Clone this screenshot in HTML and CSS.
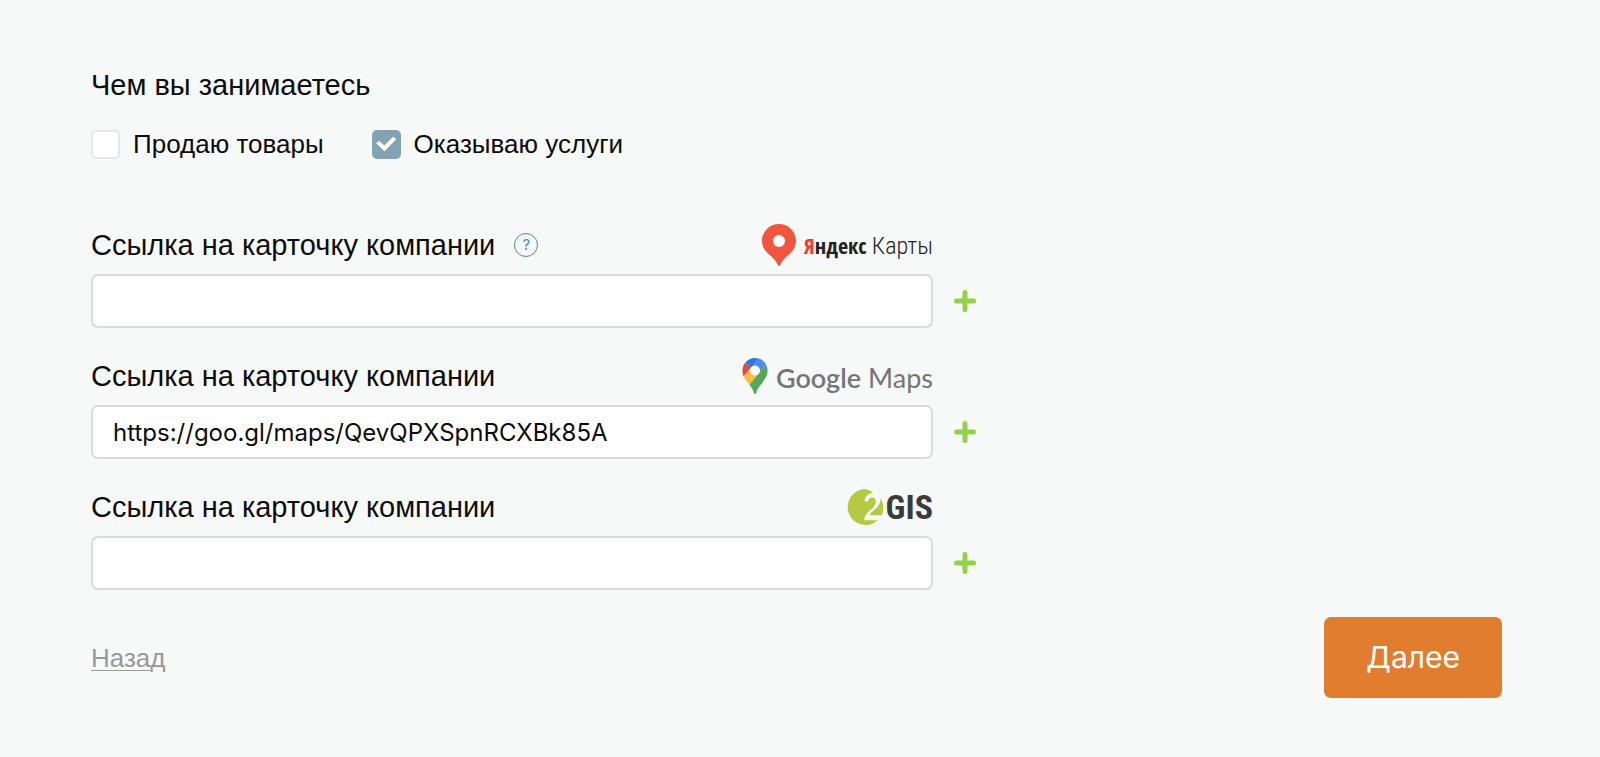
FILE: index.html
```html
<!DOCTYPE html>
<html lang="ru">
<head>
<meta charset="utf-8">
<meta name="viewport" content="width=device-width, initial-scale=1">
<title>О компании</title>
<link rel="stylesheet" href="styles.css">
</head>
<body>
<form class="page">
  <fieldset class="activity">
    <legend class="activity-title">Чем вы занимаетесь</legend>
    <div class="options">
      <label class="option"><input class="check" type="checkbox">Продаю товары</label>
      <label class="option"><input class="check" type="checkbox" checked>Оказываю услуги</label>
    </div>
  </fieldset>

  <div class="fields">
    <div class="field">
      <div class="field-head">
        <label class="field-label" for="yandex">Ссылка на карточку компании</label>
        <button class="help" type="button" aria-label="Подсказка">?</button>
        <span class="brand brand-yandex">
          <svg class="yandex-pin" viewBox="0 0 34 42" aria-hidden="true">
            <path fill="#ee563f" d="M17 0C7.600 0 0 7.500 0 16.800c0 5.400 2.400 9.400 6.300 12.900 4.600 4 7.900 7 9.600 11.500.4 1 1.800 1 2.200 0 1.700-4.500 5-7.500 9.600-11.500C31.600 26.200 34 22.200 34 16.800 34 7.500 26.400 0 17 0z"/>
            <circle cx="17" cy="17" r="6" fill="#fff"/>
          </svg>
          <span class="yandex-name"><b class="yandex-word"><span class="yandex-ya">Я</span>ндекс</b> Карты</span>
        </span>
      </div>
      <input class="text-input" id="yandex" type="text">
      <button class="add" type="button" aria-label="Добавить ссылку">
        <svg class="plus" viewBox="0 0 22 22" aria-hidden="true"><path d="M11 2.500v17M2.500 11h17"/></svg>
      </button>
    </div>

    <div class="field">
      <div class="field-head">
        <label class="field-label" for="google">Ссылка на карточку компании</label>
        <span class="brand brand-google">
          <svg class="google-pin" viewBox="0 0 92.300 132.300" aria-hidden="true">
            <path fill="#2f74df" d="M60.200 2.200C55.800.8 51 0 46.100 0 32 0 19.300 6.400 10.800 16.500l21.800 18.300z"/>
            <path fill="#db4f42" d="M10.800 16.500C4.100 24.500 0 34.900 0 46.100c0 8.700 1.700 15.700 4.600 22l28-33.300z"/>
            <path fill="#4f8af0" d="M46.200 28.500c9.800 0 17.700 7.900 17.700 17.700 0 4.300-1.600 8.300-4.200 11.400 0 0 13.900-16.600 27.500-32.700-5.600-10.800-15.300-19-27-22.700L32.600 34.800c3.300-3.800 8.100-6.300 13.600-6.300"/>
            <path fill="#f6bd42" d="M46.200 63.800c-9.800 0-17.700-7.900-17.700-17.700 0-4.300 1.500-8.300 4.100-11.300l-28 33.300c4.800 10.600 12.800 19.200 21 29.900l34.100-40.500c-3.300 3.900-8.100 6.300-13.500 6.300"/>
            <path fill="#56a65b" d="M59.100 109.200c15.400-24.100 33.300-35 33.300-63 0-7.700-1.900-14.900-5.200-21.300L25.600 98c2.600 3.400 5.300 7.300 7.900 11.300 9.400 14.500 6.800 23.100 12.800 23.100s3.400-8.700 12.800-23.200"/>
            <circle cx="46.200" cy="46.200" r="17.700" fill="#fff"/>
          </svg>
          <span class="google-name"><b class="google-word">Google</b> Maps</span>
        </span>
      </div>
      <input class="text-input" id="google" type="text" value="https://goo.gl/maps/QevQPXSpnRCXBk85A">
      <button class="add" type="button" aria-label="Добавить ссылку">
        <svg class="plus" viewBox="0 0 22 22" aria-hidden="true"><path d="M11 2.500v17M2.500 11h17"/></svg>
      </button>
    </div>

    <div class="field">
      <div class="field-head">
        <label class="field-label" for="gis">Ссылка на карточку компании</label>
        <span class="brand brand-gis">
          <svg class="gis-mark" viewBox="0 0 37 36" role="img" aria-label="2">
            <path fill="#b5ca42" d="M18.300 0A18 18 0 1 0 30.800 31.300H17.200c0-4.100 2-6.900 6.300-10.300 3.900-3 5.300-5.500 5.300-8.600 0-2.600-1.300-3.900-3.400-3.900-2.300 0-3.600 1.300-4.600 4.100l-3.400-.6c.8-4.500 4-7.700 9-7.900A18 18 0 0 0 18.300 0z"/>
            <path fill="#b5ca42" d="M33.400 9.200c.2 5.700-2.300 8.600-6.500 12-2.400 1.900-3.700 3.400-4.200 5h12.200c2.300-5.700 2-11.800-1.500-17z"/>
          </svg>
          <span class="gis-name">GIS</span>
        </span>
      </div>
      <input class="text-input" id="gis" type="text">
      <button class="add" type="button" aria-label="Добавить ссылку">
        <svg class="plus" viewBox="0 0 22 22" aria-hidden="true"><path d="M11 2.500v17M2.500 11h17"/></svg>
      </button>
    </div>
  </div>

  <div class="actions">
    <a class="back" href="#">Назад</a>
    <button class="next" type="submit">Далее</button>
  </div>
</form>
</body>
</html>
```

FILE: styles.css
```css
* {
  box-sizing: border-box;
}

body {
  margin: 0;
  background: #f7f9f8;
  color: #0c0c0c;
  font-family: "Liberation Sans", Arial, sans-serif;
}

.page {
  padding: 68px 98px 56px 91px;
}

.activity {
  margin: 0;
  padding: 0;
  border: 0;
}

.activity-title {
  padding: 0;
  font-size: 29px;
  line-height: 34px;
}

.options {
  display: flex;
  flex-wrap: wrap;
  gap: 12px 48px;
  padding-top: 26px;
}

.option {
  display: flex;
  align-items: center;
  gap: 13px;
  font-size: 26px;
  line-height: 32px;
}

.check {
  appearance: none;
  display: grid;
  place-items: center;
  width: 29px;
  height: 29px;
  margin: 0;
  border: 2px solid #e2e9ee;
  border-radius: 5px;
  background: #fff;
}

.check:checked {
  border-color: #83a3b5;
  background: #83a3b5;
}

.check:checked::before {
  content: "";
  width: 20px;
  height: 16px;
  background: #fff;
  clip-path: polygon(0 45%, 15% 29%, 41% 60%, 85% 4%, 100% 20%, 42% 96%);
}

.fields {
  display: grid;
  gap: 27px;
  margin-top: 64px;
}

.field {
  display: grid;
  grid-template-columns: minmax(0, 842px) 22px;
  column-gap: 21px;
  row-gap: 8px;
  align-items: center;
}

.field-head {
  grid-column: 1 / 2;
  display: flex;
  align-items: center;
  gap: 19px;
  height: 42px;
}

.field-label {
  font-size: 29px;
  line-height: 34px;
}

.help {
  width: 24px;
  height: 24px;
  padding: 0;
  border: 1px solid #4a86c5;
  border-radius: 50%;
  background: transparent;
  color: #4a86c5;
  font: 15px/20px Inter, sans-serif;
}

.brand {
  display: flex;
  align-items: center;
  margin-left: auto;
  white-space: nowrap;
}

.brand-yandex {
  gap: 8px;
}

.yandex-pin {
  width: 34px;
  height: 42px;
}

.yandex-name {
  color: #222;
  font: 300 24px/32px "Roboto Condensed", "Liberation Sans Narrow", sans-serif;
}

.yandex-word {
  font: 700 22px/32px "Open Sans Condensed", "Roboto Condensed", sans-serif;
}

.yandex-ya {
  color: #f33b30;
}

.brand-google {
  gap: 8px;
}

.google-pin {
  width: 26px;
  height: 36px;
}

.google-name {
  padding-top: 4px;
  color: #757575;
  font: 27px/34px Lato, sans-serif;
}

.google-word {
  font-weight: 600;
}

.brand-gis {
  gap: 2px;
}

.gis-mark {
  width: 37px;
  height: 36px;
}

.gis-name {
  color: #3b3b3d;
  font: bold 34px/36px "Roboto Condensed", "Liberation Sans Narrow", sans-serif;
}

.text-input {
  grid-column: 1 / 2;
  width: 100%;
  height: 54px;
  padding: 0 20px;
  border: 2px solid #dadcdc;
  border-radius: 7px;
  background: #fff;
  color: #0c0c0c;
  font: 24px/32px Inter, sans-serif;
}

.add {
  grid-column: 2 / 3;
  display: block;
  width: 22px;
  height: 22px;
  padding: 0;
  border: 0;
  background: transparent;
}

.plus {
  display: block;
  width: 22px;
  height: 22px;
  fill: none;
  stroke: #94d14b;
  stroke-width: 5;
  stroke-linecap: round;
}

.actions {
  display: flex;
  align-items: center;
  justify-content: space-between;
  margin-top: 27px;
}

.back {
  color: #979999;
  font-size: 26px;
  line-height: 32px;
  text-decoration-thickness: 1px;
  text-underline-offset: 3px;
}

.next {
  padding: 20px 42px;
  border: 0;
  border-radius: 7px;
  background: #e17d2f;
  color: #fff;
  font: 30px/41px Inter, sans-serif;
}
```
